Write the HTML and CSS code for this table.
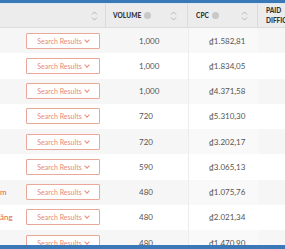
FILE: index.html
```html
<!DOCTYPE html>
<html>
<head>
<meta charset="utf-8">
<link rel="stylesheet" href="styles.css">
</head>
<body>
<div class="topbar"></div>
<div class="table">
  <div class="row head">
    <div class="cell kw"><span class="sort"><svg width="7" height="12" viewBox="0 0 7 12"><path d="M1 4.5 L3.5 2 L6 4.5 M1 7.5 L3.5 10 L6 7.5" fill="none" stroke="#b5b5b5" stroke-width="1"/></svg></span></div>
    <div class="cell vol"><span class="ht">VOLUME</span><span class="info"></span><span class="sort"><svg width="7" height="12" viewBox="0 0 7 12"><path d="M1 4.5 L3.5 2 L6 4.5 M1 7.5 L3.5 10 L6 7.5" fill="none" stroke="#b5b5b5" stroke-width="1"/></svg></span></div>
    <div class="cell cpc"><span class="ht">CPC</span><span class="info"></span><span class="sort"><svg width="7" height="12" viewBox="0 0 7 12"><path d="M1 4.5 L3.5 2 L6 4.5 M1 7.5 L3.5 10 L6 7.5" fill="none" stroke="#b5b5b5" stroke-width="1"/></svg></span></div>
    <div class="cell pd"><span class="ht2">PAID<br>DIFFICULTY</span></div>
  </div>
  <div class="row"><div class="cell kw"><span class="kwt"></span><span class="btn">Search Results <i class="chev"></i></span></div><div class="cell vol">1,000</div><div class="cell cpc">₫1.582,81</div><div class="cell pd"></div></div>
  <div class="row"><div class="cell kw"><span class="kwt"></span><span class="btn">Search Results <i class="chev"></i></span></div><div class="cell vol">1,000</div><div class="cell cpc">₫1.834,05</div><div class="cell pd"></div></div>
  <div class="row"><div class="cell kw"><span class="kwt"></span><span class="btn">Search Results <i class="chev"></i></span></div><div class="cell vol">1,000</div><div class="cell cpc">₫4.371,58</div><div class="cell pd"></div></div>
  <div class="row"><div class="cell kw"><span class="kwt"></span><span class="btn">Search Results <i class="chev"></i></span></div><div class="cell vol">720</div><div class="cell cpc">₫5.310,30</div><div class="cell pd"></div></div>
  <div class="row"><div class="cell kw"><span class="kwt"></span><span class="btn">Search Results <i class="chev"></i></span></div><div class="cell vol">720</div><div class="cell cpc">₫3.202,17</div><div class="cell pd"></div></div>
  <div class="row"><div class="cell kw"><span class="kwt"></span><span class="btn">Search Results <i class="chev"></i></span></div><div class="cell vol">590</div><div class="cell cpc">₫3.065,13</div><div class="cell pd"></div></div>
  <div class="row"><div class="cell kw"><span class="kwt">m</span><span class="btn">Search Results <i class="chev"></i></span></div><div class="cell vol">480</div><div class="cell cpc">₫1.075,76</div><div class="cell pd"></div></div>
  <div class="row"><div class="cell kw"><span class="kwt">ăng</span><span class="btn">Search Results <i class="chev"></i></span></div><div class="cell vol">480</div><div class="cell cpc">₫2.021,34</div><div class="cell pd"></div></div>
  <div class="row"><div class="cell kw"><span class="kwt"></span><span class="btn">Search Results <i class="chev"></i></span></div><div class="cell vol">480</div><div class="cell cpc">₫1.470,90</div><div class="cell pd"></div></div>
</div>
<div class="botbar"></div>
</body>
</html>
```
FILE: styles.css
```css
html, body { margin: 0; padding: 0; }
body { width: 285px; height: 249px; overflow: hidden; position: relative; background: #fff; font-family: "Lato", "Open Sans", sans-serif; color: #555; }
.topbar { height: 3px; background: #3a78b8; border-bottom: 1px solid #dce8f4; }
.table { width: 300px; }
.row { display: grid; grid-template-columns: 106px 82px 70px 42px; height: 25.25px; }
.row:nth-child(odd) { background: #fff; }
.row:nth-child(even) { background: #f6f6f6; }
.row.head { height: 23px; background: #ececec; border-bottom: 1px solid #dcdcdc; }
.cell { display: flex; align-items: center; font-size: 8px; }
.row.head .cell { border-right: 1px solid #dadada; padding-left: 7px; }
.row.head .kw { justify-content: flex-end; padding-right: 7px; }
.row.head .pd { padding-left: 8px; border-right: none; }
.ht { font-weight: 900; font-size: 6.5px; color: #333; letter-spacing: 0.1px; }
.ht2 { font-weight: 900; font-size: 6.5px; color: #333; line-height: 10px; }
.info { width: 7px; height: 7px; border-radius: 50%; background: #c8c8c8; margin-left: 3px; }
.vol .sort { margin-left: auto; margin-right: 10px; }
.cpc .sort { margin-left: auto; margin-right: 9px; }
.sort { display: flex; }
.kw { position: relative; }
.kwt { position: absolute; left: 0; color: #e8603c; font-size: 8px; }
.btn { margin-left: 26px; width: 74px; height: 16px; box-sizing: border-box; border: 1px solid #e9a899; border-radius: 1px; background: #fff; color: #e88a78; font-size: 7px; display: flex; align-items: center; justify-content: center; }
.chev { display: inline-block; width: 3px; height: 3px; border-right: 1px solid #e88a78; border-bottom: 1px solid #e88a78; transform: rotate(45deg); margin-left: 3px; margin-top: -2px; }
.row .vol { padding-left: 33px; }
.row .cpc { padding-left: 20px; border-left: 1px solid #ececec; }
.row:not(.head) .cpc { background: rgba(255,255,255,0.35); }
.botbar { position: absolute; left: 0; bottom: 0; width: 285px; height: 4px; background: #3a78b8; }
```
